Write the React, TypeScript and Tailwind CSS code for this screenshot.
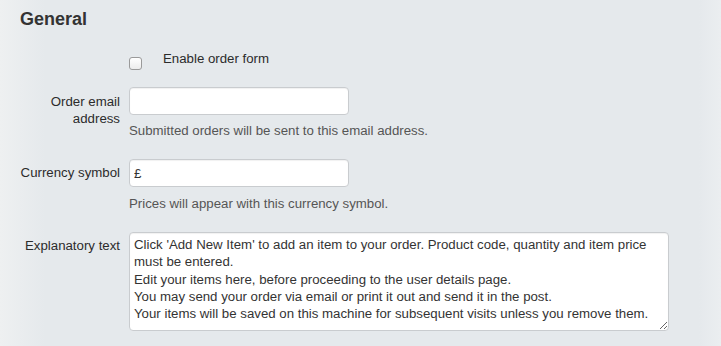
const explanatory = [
  "Click 'Add New Item' to add an item to your order. Product code, quantity and item price must be entered.",
  "Edit your items here, before proceeding to the user details page.",
  "You may send your order via email or print it out and send it in the post.",
  "Your items will be saved on this machine for subsequent visits unless you remove them.",
].join("\n");

const inputCls =
  "block h-[28px] w-[220px] rounded-[4px] border border-[#c9cccf] bg-white px-[4px] text-[13.25px] text-[#333] shadow-[inset_0_1px_1px_rgba(0,0,0,0.06)] outline-none";

export default function App() {
  return (
    <div className="h-[346px] w-full overflow-hidden bg-[linear-gradient(to_right,#eef0f1,#e5e9ec_45px,#e5e9ec_calc(100%-22px),#ebeef0)] pl-[20px] pt-[9px] font-['Liberation_Sans',Arial,sans-serif] text-[13.25px] leading-[16px] text-[#2b2b2b]">
      {/* Section heading */}
      <h2 className="text-[18px] font-bold leading-[21px] text-[#333]">General</h2>

      <div className="mt-[21px] grid grid-cols-[100px_1fr] gap-x-[9px]">
        {/* Enable */}
        <div />
        <div className="flex items-start">
          <input
            type="checkbox"
            className="mt-[6px] h-[13px] w-[13px] appearance-none rounded-[3px] border border-[#9a9a9a] bg-[linear-gradient(#fff,#ececec)]"
          />
          <span className="ml-[21px]">Enable order form</span>
        </div>

        {/* Email */}
        <label className="mt-[17px] pt-[7px] text-right leading-[16.5px]">Order email address</label>
        <div className="mt-[17px]">
          <input type="text" className={inputCls} />
          <p className="mt-[8px] text-[#555]">Submitted orders will be sent to this email address.</p>
        </div>

        {/* Currency */}
        <label className="mt-[20px] whitespace-nowrap pt-[6px] text-right">Currency symbol</label>
        <div className="mt-[20px]">
          <input type="text" defaultValue="£" className={inputCls} />
          <p className="mt-[9px] text-[#555]">Prices will appear with this currency symbol.</p>
        </div>

        {/* Explanatory */}
        <label className="mt-[20px] whitespace-nowrap pt-[6px] text-right">Explanatory text</label>
        <div className="mt-[20px]">
          <textarea
            defaultValue={explanatory}
            className="block h-[99px] w-[540px] rounded-[4px] border border-[#c9cccf] bg-white px-[4px] pt-[3px] text-[13.25px] leading-[17.25px] text-[#333] shadow-[inset_0_1px_1px_rgba(0,0,0,0.06)] outline-none"
          />
        </div>
      </div>
    </div>
  );
}
